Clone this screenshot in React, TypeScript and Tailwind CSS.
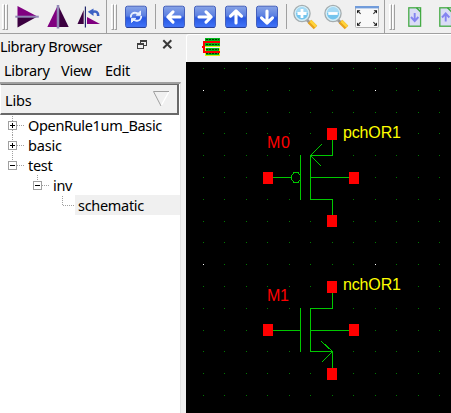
import React from 'react';

const COLS = [203, 224, 246, 267, 289, 310, 332, 353, 375, 396, 418, 439];
const ROWS = [68, 90, 112, 133, 155, 177, 199, 221, 242, 264, 286, 308, 330, 351, 373, 395];

function Grip({ className = '' }: { className?: string }) {
  return (
    <div className={`flex h-[26px] w-[6px] shrink-0 ${className}`}>
      <div className="w-[3px] border-t border-r border-b border-l border-t-white border-r-[#a0a0a0] border-b-[#a0a0a0] border-l-white" />
      <div className="w-[3px] border-t border-r border-b border-l border-t-white border-r-[#a0a0a0] border-b-[#a0a0a0] border-l-white" />
    </div>
  );
}

function BlueButton({ children, className = '' }: { children: React.ReactNode; className?: string }) {
  return (
    <svg className={`h-[24px] w-[22px] shrink-0 ${className}`} viewBox="0 0 22 24">
      <defs>
        <linearGradient id="blue" x1="0" y1="0" x2="0" y2="1">
          <stop offset="0" stopColor="#88a4e6" />
          <stop offset="0.45" stopColor="#5c80e2" />
          <stop offset="0.55" stopColor="#2857e0" />
          <stop offset="1" stopColor="#4275fa" />
        </linearGradient>
      </defs>
      <rect x="0.5" y="1.2" width="21" height="21.2" rx="2" fill="url(#blue)" stroke="#4560bc" />
      <path d="M1.5 22.5h19" stroke="#263f98" />
      <g fill="none" stroke="#fff" strokeWidth="3.1" strokeLinecap="round" strokeLinejoin="round">
        {children}
      </g>
    </svg>
  );
}

function Magnifier({ plus, className = '' }: { plus?: boolean; className?: string }) {
  return (
    <svg className={`h-[26px] w-[25px] shrink-0 ${className}`} viewBox="0 0 25 26">
      <path d="M13.5 15.5l4 4" stroke="#999" strokeWidth="3" />
      <path d="M16.5 17.5l6 6" stroke="#e8a21c" strokeWidth="5" />
      <path d="M17.5 17l5.5 5.5" stroke="#ffd43a" strokeWidth="2.6" />
      <circle cx="9" cy="9.5" r="8" fill="#a9ddf5" stroke="#a5adaf" strokeWidth="1.5" />
      <circle cx="9" cy="9.5" r="6.7" fill="#74c5ee" stroke="#d5edf6" strokeWidth="1.4" />
      <path d="M3 9a6 6 0 0 1 12 0z" fill="#a5daf5" />
      <path d={plus ? 'M4.5 9.5h9M9 5v9' : 'M4.3 9.5h9.4'} stroke="#fff" strokeWidth="2.8" />
    </svg>
  );
}

function PageIcon({ up, className = '' }: { up?: boolean; className?: string }) {
  return (
    <svg className={`h-[22px] w-[14px] shrink-0 ${className}`} viewBox="0 0 14 22">
      <rect x="0.8" y="1.8" width="11.8" height="18.4" fill="#dadcf5" stroke="#45ab45" strokeWidth="1.3" />
      <path d="M8.5 1.7l4 4" stroke="#39a839" strokeWidth="1.4" />
      <path
        d={up ? 'M6.7 15.5V8M3 11.5l3.7-4 3.7 4' : 'M6.7 7v8M3 11l3.7 4 3.7-4'}
        fill="none" stroke="#8484f0" strokeWidth="1.9"
      />
    </svg>
  );
}

function Toolbar() {
  return (
    <div className="flex h-[34px] w-full items-start overflow-hidden border-b border-[#a0a0a0] bg-[#f0f0f0]">
      <Grip className="mt-[4px] ml-[2px]" />
      <svg className="ml-[7px] h-[33px] w-[24px] shrink-0" viewBox="15 0 24 33">
        <path d="M17.5 6v10h19z" fill="#800080" />
        <path d="M17.5 27.5V17h19z" fill="#3b0040" />
        <path d="M15.3 16.7h23.5" stroke="#9186b5" strokeWidth="2" />
      </svg>
      <svg className="ml-[8px] h-[33px] w-[22px] shrink-0" viewBox="47 0 22 33">
        <path d="M57.5 6v21H47.3z" fill="#800080" />
        <path d="M58.5 6v21h10.2z" fill="#3b0040" />
        <path d="M58 5v23.5" stroke="#9186b5" strokeWidth="2.5" />
      </svg>
      <svg className="ml-[8px] h-[33px] w-[24px] shrink-0" viewBox="77 0 24 33">
        <path d="M83.7 10v14h-6.2z" fill="#3b0040" />
        <path d="M87 17v7h13z" fill="#800080" />
        <path d="M85.4 6.5v21" stroke="#22286c" strokeWidth="1.2" />
        <path d="M92 12c4-1.5 6.4.1 6.2 4" fill="none" stroke="#3c62c4" strokeWidth="2.6" />
        <path d="M93.5 8.5v7.5l-5.7-4.2z" fill="#3c62c4" />
      </svg>
      <div className="ml-[5px] h-[33px] w-px shrink-0 bg-[#a0a0a0]" />
      <Grip className="mt-[4px] ml-[4px]" />
      <BlueButton className="mt-[5px] ml-[8px]">
        <g strokeWidth="1.9" stroke="#e9f1ff" strokeLinecap="butt">
          <path d="M5.9 12.5c-.6-3.5 2.3-5.3 5.2-4.6l3 1.1" />
          <path d="M16.1 11c.6 3.5-2.3 5.3-5.2 4.6l-3-1.1" />
          <path d="M15.5 6v4.2h-4.2zM6.5 17.5v-4.2h4.2z" fill="#e9f1ff" strokeWidth="1" />
        </g>
      </BlueButton>
      <div className="mt-[4px] ml-[8px] h-[25px] w-px shrink-0 bg-[#a0a0a0]" />
      <BlueButton className="mt-[5px] ml-[7px]"><path d="M17 12H5M10 6.8L4.8 12l5.2 5.2" /></BlueButton>
      <BlueButton className="mt-[5px] ml-[9px]"><path d="M5 12h12M12 6.8l5.2 5.2-5.2 5.2" /></BlueButton>
      <BlueButton className="mt-[5px] ml-[9px]"><path d="M11 18V6M5.5 11.2L11 6l5.5 5.2" /></BlueButton>
      <BlueButton className="mt-[5px] ml-[9px]"><path d="M11 6v12M5.5 12.8L11 18l5.5-5.2" /></BlueButton>
      <div className="mt-[4px] ml-[8px] h-[25px] w-px shrink-0 bg-[#a0a0a0]" />
      <Magnifier plus className="mt-[4px] ml-[6px]" />
      <Magnifier className="mt-[4px] ml-[6px]" />
      <svg className="mt-[5px] ml-[6px] h-[24px] w-[24px] shrink-0" viewBox="0 0 24 24">
        <rect x="0.5" y="1.5" width="23" height="21" rx="1" fill="#f8f8f8" stroke="#b0b0b0" />
        <path d="M0 2.2h24" stroke="#719cdb" strokeWidth="2.4" />
        <path d="M2 5.2h3.4L2 8.4zM22 5.2h-3.4L22 8.4zM2 20.8v-3.2l3.4 3.2zM22 20.8v-3.2l-3.4 3.2z" fill="#111" />
        <path d="M3 6.2l2.6 2.6M21 6.2l-2.6 2.6M3 19.8l2.6-2.6M21 19.8l-2.6-2.6" stroke="#333" strokeWidth="1.1" />
      </svg>
      <div className="ml-[5px] h-[33px] w-px shrink-0 bg-[#a0a0a0]" />
      <Grip className="mt-[4px] ml-[4px]" />
      <PageIcon className="mt-[6px] ml-[13px]" />
      <PageIcon up className="mt-[6px] ml-[17px]" />
    </div>
  );
}

function Expander({ open, last, top = 0 }: { open?: boolean; last?: boolean; top?: number }) {
  return (
    <svg className="h-[20px] w-[24px] shrink-0" viewBox="0 0 24 20" shapeRendering="crispEdges">
      <path d={last ? `M12.5 ${top}v6` : `M12.5 ${top}v${20 - top}`} stroke="#a0a0a0" strokeDasharray="1 1" />
      <rect x="8.5" y="6.5" width="8" height="8" fill="#fff" stroke="#a0a0a0" />
      <path d={open ? 'M10 10.5h5' : 'M10 10.5h5M12.5 8v5'} stroke="#000" />
      <path d="M17 10.5h7" stroke="#a0a0a0" strokeDasharray="1 1" />
    </svg>
  );
}

function LibraryBrowser() {
  return (
    <div className="flex w-[186px] shrink-0 flex-col">
      <div className="flex h-[26px] items-center">
        <span className="mb-[2px] w-[137px] text-[14.5px] tracking-[-0.36px]">Library Browser</span>
        <svg className="mb-[5px] h-[11px] w-[10px]" viewBox="0 0 10 11" shapeRendering="crispEdges">
          <path d="M3 1h7v2H3zM3 3h1v2H3zM9 3h1v4H9zM7 6h2v1H7zM0 4h7v2H0zM0 6h1v4H0zM6 6h1v4H6zM0 9h7v1H0z" fill="#404040" />
        </svg>
        <svg className="mb-[5px] ml-[15px] h-[11px] w-[11px]" viewBox="0 0 11 11">
          <path d="M1.3 1.3l8 8M9.3 1.3l-8 8" stroke="#383838" strokeWidth="2" />
        </svg>
      </div>
      <div className="flex h-[22px] items-center pb-[2px] pl-[4px] text-[14.5px] tracking-[-0.25px]">
        <span className="w-[57px]">Library</span>
        <span className="w-[44px]">View</span>
        <span>Edit</span>
      </div>
      <div className="flex w-[181px] grow flex-col border-t-2 border-r border-t-[#a0a0a0] border-r-[#e3e3e3] bg-white">
        <div className="flex h-[31px] w-[179px] shrink-0 items-center justify-between border-t border-r-2 border-b-2 border-l border-t-[#696969] border-r-[#696969] border-b-[#696969] border-l-white bg-[#f0f0f0] pr-[7px] pl-[4px]">
          <span className="mt-px text-[14.5px] tracking-[-0.2px]">Libs</span>
          <svg className="mb-px h-[18px] w-[18px]" viewBox="0 0 18 18">
            <path d="M17 1.5L9 16" stroke="#fff" strokeWidth="1.3" />
            <path d="M17 1.5H1.5L9 16" fill="none" stroke="#a0a0a0" />
          </svg>
        </div>
        <div className="flex flex-col text-[14.5px]">
          <div className="flex h-[20px] items-center">
            <Expander top={1} />
            <div className="pl-[4px] tracking-[-0.34px]">OpenRule1um_Basic</div>
          </div>
          <div className="flex h-[20px] items-center">
            <Expander />
            <div className="pl-[4px] tracking-[-0.2px]">basic</div>
          </div>
          <div className="flex h-[20px] items-center">
            <Expander open last />
            <div className="pl-[4px] tracking-[-0.3px]">test</div>
          </div>
          <div className="flex h-[20px] items-center pl-[25px]">
            <Expander open last />
            <div className="pl-[4px] tracking-[-0.3px]">inv</div>
          </div>
          <div className="flex h-[20px] items-center pl-[62px]">
            <svg className="h-[20px] w-[13px] shrink-0" viewBox="0 0 13 20" shapeRendering="crispEdges">
              <path d="M.5 1v9M1 10.5h12" stroke="#a0a0a0" strokeDasharray="1 1" />
            </svg>
            <div className="flex h-[20px] grow items-center bg-[#f0f0f0] pl-[3px] tracking-[-0.3px]">schematic</div>
          </div>
        </div>
      </div>
    </div>
  );
}

function Pin({ x, y }: { x: number; y: number }) {
  return <rect x={x} y={y} width="10" height="12" fill="#f00" />;
}

function Schematic() {
  return (
    <svg className="block h-[351px] w-[265px] bg-black" viewBox="186 62 265 351" shapeRendering="crispEdges">
      {ROWS.map((y) =>
        COLS.map((x) => (
          <rect
            key={`${x}-${y}`} x={x} y={y} width="1" height="1"
            fill={(x === 203 || x === 375) && (y === 90 || y === 264) ? '#fff' : '#007800'}
          />
        )),
      )}
      <g fill="none" stroke="#00c800">
        <path d="M272 177.5h19M300.5 155v45M310.5 155v45M310 155.5h22.5V139M310 177.5h40M310 199.5h22.5V217" />
        <path d="M321.5 144.5l-11 11 11 11" />
        <path d="M294 172.5h4l2.5 3v4l-2.5 3h-4l-2.5-3v-4z" />
        <path d="M272 330.5h28M300.5 308v44M310.5 308v44M310 308.5h22.5V291M310 330.5h40M310 351.5h22.5V369" />
        <path d="M321.5 341.5l11 10-11 11" />
      </g>
      <Pin x={327} y={128} />
      <Pin x={263} y={172} />
      <Pin x={349} y={172} />
      <Pin x={327} y={215} />
      <Pin x={327} y={281} />
      <Pin x={263} y={324} />
      <Pin x={349} y={324} />
      <Pin x={327} y={368} />
      <g className="font-['Liberation_Sans',Arial,sans-serif] text-[16px]">
        <text x="267" y="148" fill="#f00" textLength="23">M0</text>
        <text x="267" y="301" fill="#f00" textLength="22">M1</text>
        <text x="343" y="138" fill="#ff0" textLength="58">pchOR1</text>
        <text x="343" y="290" fill="#ff0" textLength="58">nchOR1</text>
      </g>
    </svg>
  );
}

export default function App() {
  return (
    <div className="flex h-[413px] w-[451px] flex-col overflow-hidden bg-[#f0f0f0] font-['Noto_Sans','Open_Sans',sans-serif] leading-[20px] text-black">
      <Toolbar />
      <div className="flex h-[379px]">
        <LibraryBrowser />
        <div className="flex w-[265px] flex-col">
          <div className="flex h-[28px] items-start rounded-tl-[3px] border-t border-l border-white pl-[15px]">
            <svg className="mt-[3px] h-[20px] w-[19px]" viewBox="0 0 19 20" shapeRendering="crispEdges">
              <path d="M3 0h15v8H3zM3 10h15v8H3z" fill="#00b818" />
              <path d="M3 8.5h15M3 17.5h15M3.5 10v8M17.5 10v8" stroke="#d8f514" />
              <path d="M4 1.5h13M4 6.5h13M4 11.5h13M4 15.5h13" stroke="#003c00" strokeDasharray="2 1" />
              <path d="M18 4H2v10h16M0 9h2" fill="none" stroke="#f00" strokeWidth="2" />
            </svg>
          </div>
          <Schematic />
        </div>
      </div>
    </div>
  );
}
